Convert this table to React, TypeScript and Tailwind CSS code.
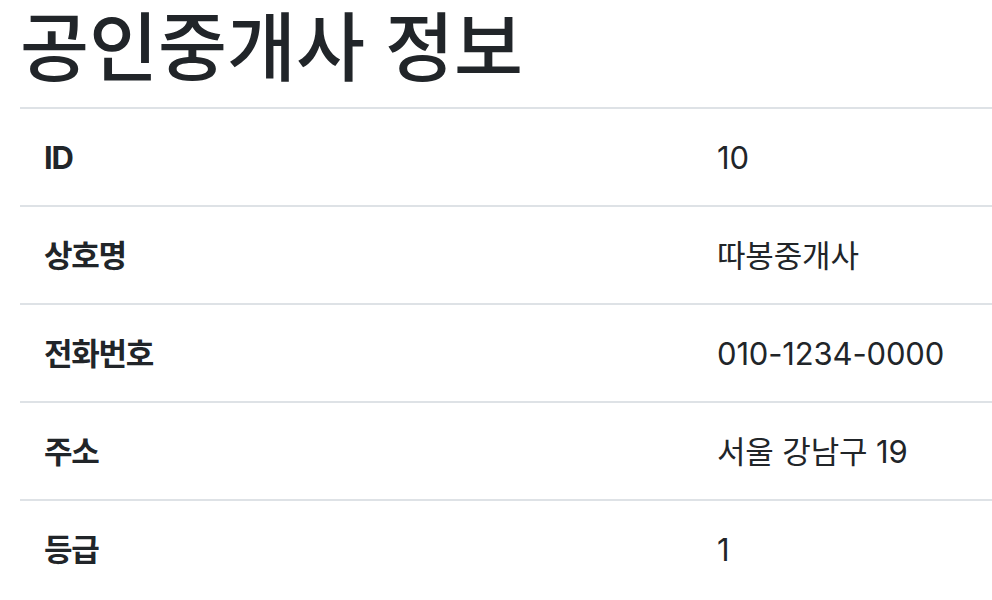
const rows = [
  { label: "ID", value: "10" },
  { label: "상호명", value: "따봉중개사" },
  { label: "전화번호", value: "010-1234-0000" },
  { label: "주소", value: "서울 강남구 19" },
  { label: "등급", value: "1" },
];

export default function App() {
  return (
    <div
      className="min-h-screen bg-white pl-5 text-[#212529]"
      style={{ fontFamily: 'Inter, "Noto Sans CJK KR", sans-serif' }}
    >
      <h1 className="pt-[7px] pb-[19px] text-[75px] leading-[81px] font-medium">
        공인중개사 정보
      </h1>

      {/* Detail table */}
      <div className="flex flex-col">
        {rows.map((row) => (
          <div
            key={row.label}
            className="grid grid-cols-[678px_1fr] border-t-2 border-[#dee2e6] h-[98px] pt-[2px] items-center text-[31px]"
          >
            <div className="pl-[24px] font-bold tracking-[-0.04em]">{row.label}</div>
            <div className="pl-[19px] tracking-[-0.005em]">{row.value}</div>
          </div>
        ))}
      </div>
    </div>
  );
}
